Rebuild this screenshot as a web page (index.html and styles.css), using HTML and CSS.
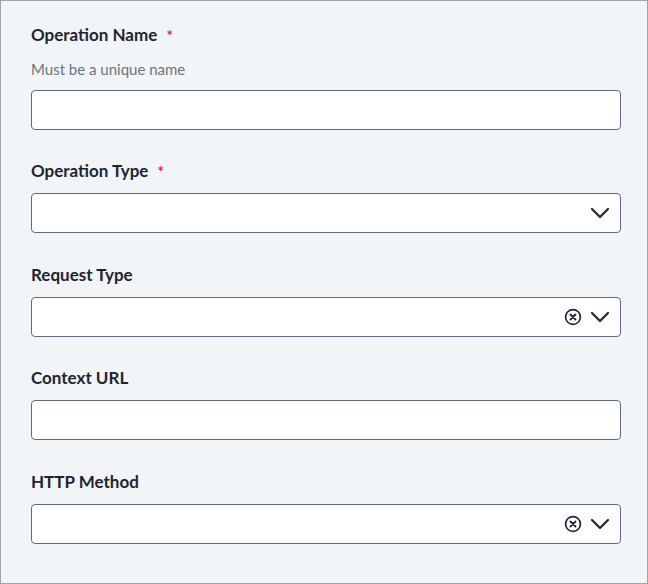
FILE: index.html
```html
<!DOCTYPE html>
<html>
<head>
<meta charset="utf-8">
<link rel="stylesheet" href="styles.css">
</head>
<body>
<div class="form">
  <div class="field">
    <div class="label">Operation Name <span class="req">*</span></div>
    <div class="help">Must be a unique name</div>
    <div class="input"></div>
  </div>
  <div class="field">
    <div class="label">Operation Type <span class="req">*</span></div>
    <div class="input select">
      <svg class="chev" width="20" height="12" viewBox="0 0 20 12"><path d="M2 2 L10 10 L18 2" fill="none" stroke="#1f2733" stroke-width="2.2" stroke-linecap="round" stroke-linejoin="round"/></svg>
    </div>
  </div>
  <div class="field">
    <div class="label">Request Type</div>
    <div class="input select">
      <svg class="clear" width="18" height="18" viewBox="0 0 18 18"><circle cx="9" cy="9" r="7.4" fill="none" stroke="#1f2733" stroke-width="1.7"/><path d="M6.5 6.5 L11.5 11.5 M11.5 6.5 L6.5 11.5" stroke="#1f2733" stroke-width="1.9" stroke-linecap="round"/></svg>
      <svg class="chev" width="20" height="12" viewBox="0 0 20 12"><path d="M2 2 L10 10 L18 2" fill="none" stroke="#1f2733" stroke-width="2.2" stroke-linecap="round" stroke-linejoin="round"/></svg>
    </div>
  </div>
  <div class="field">
    <div class="label">Context URL</div>
    <div class="input"></div>
  </div>
  <div class="field">
    <div class="label">HTTP Method</div>
    <div class="input select">
      <svg class="clear" width="18" height="18" viewBox="0 0 18 18"><circle cx="9" cy="9" r="7.4" fill="none" stroke="#1f2733" stroke-width="1.7"/><path d="M6.5 6.5 L11.5 11.5 M11.5 6.5 L6.5 11.5" stroke="#1f2733" stroke-width="1.9" stroke-linecap="round"/></svg>
      <svg class="chev" width="20" height="12" viewBox="0 0 20 12"><path d="M2 2 L10 10 L18 2" fill="none" stroke="#1f2733" stroke-width="2.2" stroke-linecap="round" stroke-linejoin="round"/></svg>
    </div>
  </div>
</div>
</body>
</html>
```
FILE: styles.css
```css
html, body {
  margin: 0;
  padding: 0;
}
body {
  font-family: "Lato", "Noto Sans", sans-serif;
}
.form {
  box-sizing: border-box;
  width: 648px;
  height: 584px;
  border: 1px solid #a3a3a3;
  background: #f2f5f8;
  padding: 23px 26px 0 30px;
  display: flex;
  flex-direction: column;
  gap: 30.4px;
}
.field {
  display: flex;
  flex-direction: column;
}
.label {
  font-size: 17px;
  font-weight: 700;
  line-height: 22px;
  color: #1d2530;
  margin-bottom: 11px;
}
.req {
  color: #e0174a;
  margin-left: 5px;
  font-size: 15px;
}
.help {
  font-size: 15px;
  line-height: 20px;
  color: #6a7482;
  margin-top: 2px;
  margin-bottom: 11px;
}
.input {
  box-sizing: border-box;
  height: 40px;
  border: 1px solid #5e6b7c;
  border-radius: 4px;
  background: #ffffff;
  display: flex;
  align-items: center;
  justify-content: flex-end;
  padding-right: 10px;
  gap: 8px;
}
.chev, .clear {
  display: block;
}
```
